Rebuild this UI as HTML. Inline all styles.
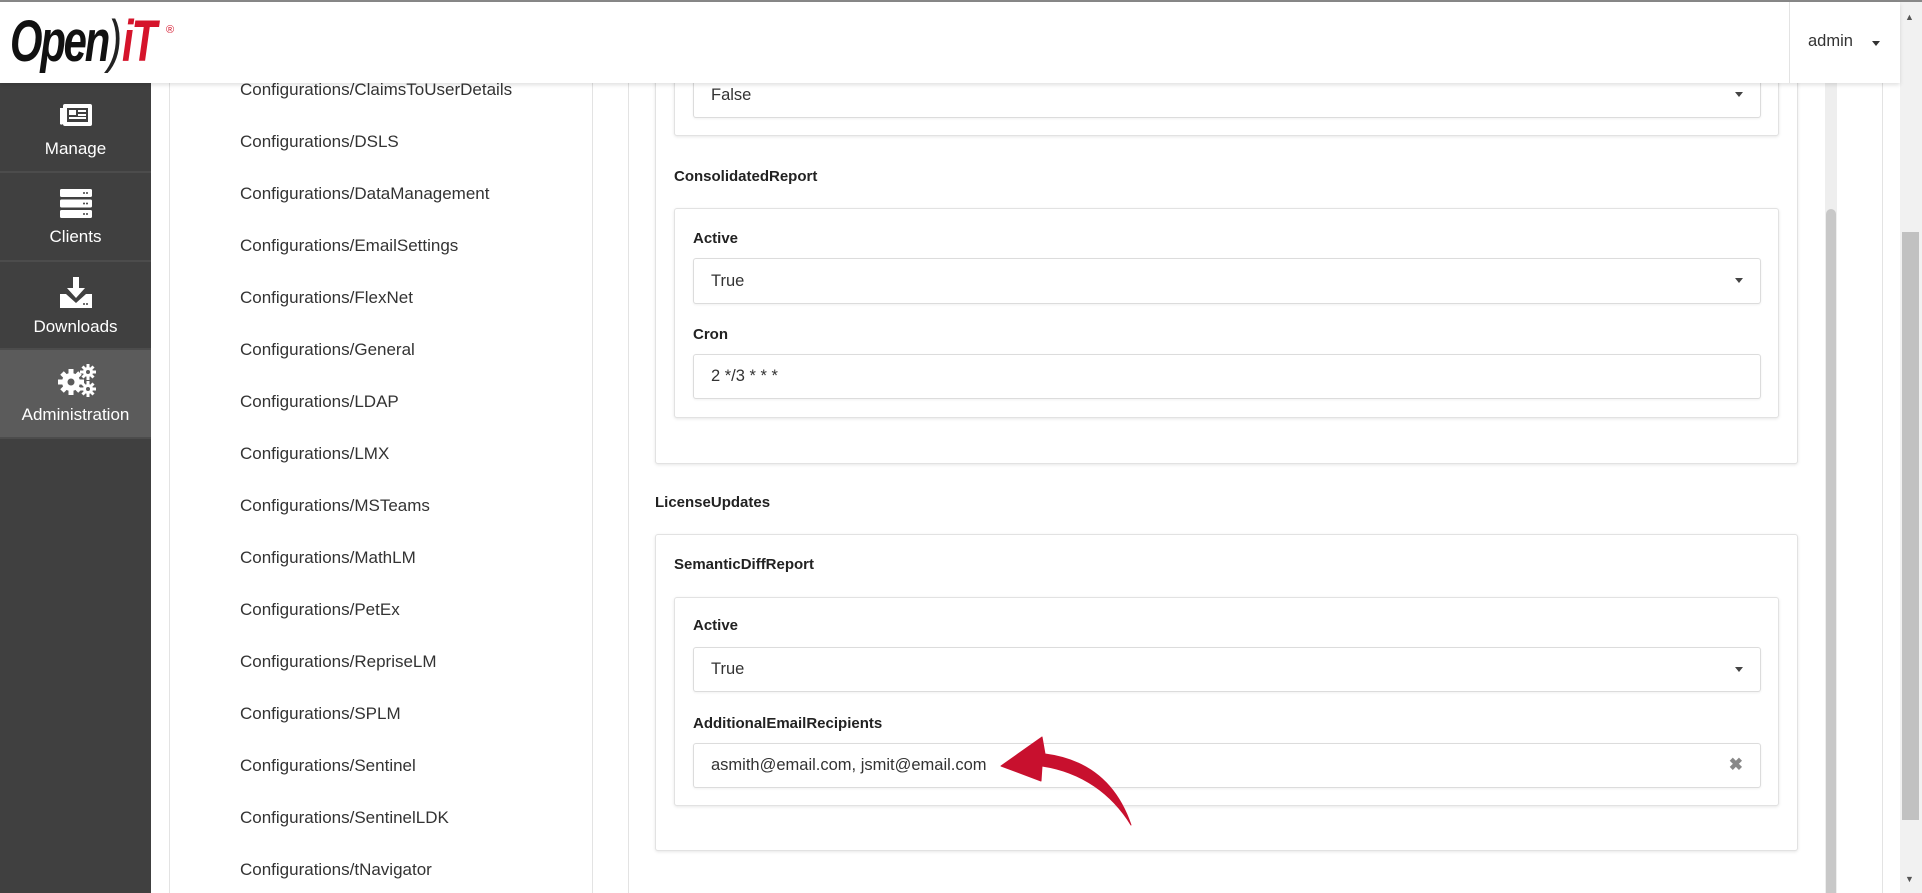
<!DOCTYPE html>
<html><head><meta charset="utf-8"><style>
*{box-sizing:border-box;margin:0;padding:0}
body{width:1922px;height:891px;overflow:hidden;background:#fff;font-family:"Liberation Sans",sans-serif;color:#333;position:relative;border-top:2px solid #888}
.abs{position:absolute}
#hdr{left:0;top:0;width:1900px;height:81px;background:#fff;box-shadow:0 2px 4px rgba(0,0,0,.12);z-index:5}
#side{left:0;top:81px;width:151px;height:810px;background:#404040}
.it{position:absolute;left:0;width:151px;color:#fff;text-align:center;font-size:17px;border-bottom:2px solid #4c4c4c}
.it span{position:absolute;left:0;width:151px;text-align:center}
.list{font-size:17px;color:#333;left:240px}
.lbl{font-size:15px;font-weight:bold;color:#222}
.card{border:1px solid #e2e2e2;border-radius:3px;box-shadow:0 1px 3px rgba(0,0,0,.1);background:#fff}
.inp{border:1px solid #dcdcdc;border-radius:3px;background:#fff;font-size:16.5px;color:#333;padding-left:17px;display:flex;align-items:center;box-shadow:0 1px 2px rgba(0,0,0,.06)}
.car{position:absolute;right:17px;top:50%;margin-top:-3px;width:0;height:0;border-left:4px solid transparent;border-right:4px solid transparent;border-top:5px solid #444}
</style></head><body>
<div id="hdr" class="abs">
 <div class="abs" style="left:10px;top:11px;font-size:58px;font-weight:bold;font-style:italic;letter-spacing:-3px;transform:scaleX(.72);transform-origin:left top;line-height:58px;color:#111;white-space:nowrap">Open<span style="font-weight:normal;color:#222;letter-spacing:0">)</span><span style="color:#d5142b">iT</span></div>
 <div class="abs" style="left:166px;top:22px;font-size:11px;color:#d5142b">®</div>
 <div class="abs" style="left:1789px;top:0;width:1px;height:81px;background:#e3e3e3"></div>
 <div class="abs" style="left:1808px;top:30px;font-size:16.5px;color:#333">admin</div>
 <div class="abs" style="left:1872px;top:39px;border-left:4px solid transparent;border-right:4px solid transparent;border-top:5px solid #333"></div>
</div>
<div class="abs" style="left:1900px;top:0;width:22px;height:891px;background:#f1f1f1"></div>
<div class="abs" style="left:1902px;top:230px;width:17px;height:588px;background:#c1c1c1"></div>
<div class="abs" style="left:1905px;top:10px;font-size:9px;color:#555">▲</div>
<div class="abs" style="left:1905px;top:872px;font-size:9px;color:#555">▼</div>

<div id="side" class="abs">
 <div class="it" style="top:0;height:90px">
  <svg class="abs" style="left:59px;top:20px" width="34" height="24" viewBox="0 0 34 24"><rect x="4" y="1" width="29" height="22" rx="2" fill="#fff"/><path d="M1 5h3v16a2 2 0 0 1-3 0z" fill="#fff"/><rect x="8" y="5" width="21" height="14" fill="#404040"/><rect x="10" y="7" width="7" height="5" fill="#fff"/><rect x="19" y="7" width="8" height="2" fill="#fff"/><rect x="19" y="11" width="8" height="2" fill="#fff"/><rect x="10" y="14" width="17" height="2" fill="#fff"/></svg>
  <span style="top:56px">Manage</span></div>
 <div class="it" style="top:90px;height:89px">
  <svg class="abs" style="left:60px;top:16px" width="32" height="29" viewBox="0 0 32 29"><rect x="0" y="0" width="32" height="8" rx="1.5" fill="#fff"/><rect x="0" y="10.5" width="32" height="8" rx="1.5" fill="#fff"/><rect x="0" y="21" width="32" height="8" rx="1.5" fill="#fff"/><g fill="#404040"><circle cx="24" cy="4" r="1"/><circle cx="27" cy="4" r="1"/><circle cx="24" cy="14.5" r="1"/><circle cx="27" cy="14.5" r="1"/><circle cx="24" cy="25" r="1"/><circle cx="27" cy="25" r="1"/></g></svg>
  <span style="top:54px">Clients</span></div>
 <div class="it" style="top:179px;height:88px">
  <svg class="abs" style="left:60px;top:15px" width="32" height="31" viewBox="0 0 32 31"><path d="M13 0h6v11h6l-9 10-9-10h6z" fill="#fff"/><path d="M0 17h6l10 9 10-9h6v14H0z" fill="#fff"/><circle cx="24" cy="27" r="1" fill="#404040"/><circle cx="27" cy="27" r="1" fill="#404040"/></svg>
  <span style="top:55px">Downloads</span></div>
 <div class="it" style="top:267px;height:89px;background:#5b5b5b">
  <svg class="abs" style="left:57px;top:14px" width="40" height="33" viewBox="0 0 40 33"><g fill="#fff"><circle cx="14" cy="18" r="9"/><g stroke="#fff" stroke-width="5"><path d="M14 5v26M1 18h26M5 9l18 18M23 9L5 27"/></g><circle cx="31" cy="8" r="5"/><g stroke="#fff" stroke-width="3"><path d="M31 0v16M23 8h16M25.5 2.5l11 11M36.5 2.5l-11 11"/></g><circle cx="31" cy="25" r="5"/><g stroke="#fff" stroke-width="3"><path d="M31 17v16M23 25h16M25.5 19.5l11 11M36.5 19.5l-11 11"/></g></g><circle cx="14" cy="18" r="3.5" fill="#5b5b5b"/><circle cx="31" cy="8" r="2" fill="#5b5b5b"/><circle cx="31" cy="25" r="2" fill="#5b5b5b"/></svg>
  <span style="top:55px">Administration</span></div>
</div>

<div class="abs" style="left:169px;top:81px;width:1px;height:810px;background:#e3e3e3"></div>
<div class="abs" style="left:592px;top:81px;width:1px;height:810px;background:#e3e3e3"></div>
<div class="abs" style="left:628px;top:81px;width:1px;height:810px;background:#e3e3e3"></div>
<div class="abs" style="left:1882px;top:81px;width:1px;height:810px;background:#e3e3e3"></div>
<div class="abs" style="left:1825px;top:81px;width:12px;height:810px;background:#eee"></div>
<div class="abs" style="left:1826px;top:207px;width:10px;height:684px;background:#c8c8c8;border-radius:5px 5px 0 0"></div>

<div class="abs list" style="top:78px">Configurations/ClaimsToUserDetails</div>
<div class="abs list" style="top:130px">Configurations/DSLS</div>
<div class="abs list" style="top:182px">Configurations/DataManagement</div>
<div class="abs list" style="top:234px">Configurations/EmailSettings</div>
<div class="abs list" style="top:286px">Configurations/FlexNet</div>
<div class="abs list" style="top:338px">Configurations/General</div>
<div class="abs list" style="top:390px">Configurations/LDAP</div>
<div class="abs list" style="top:442px">Configurations/LMX</div>
<div class="abs list" style="top:494px">Configurations/MSTeams</div>
<div class="abs list" style="top:546px">Configurations/MathLM</div>
<div class="abs list" style="top:598px">Configurations/PetEx</div>
<div class="abs list" style="top:650px">Configurations/RepriseLM</div>
<div class="abs list" style="top:702px">Configurations/SPLM</div>
<div class="abs list" style="top:754px">Configurations/Sentinel</div>
<div class="abs list" style="top:806px">Configurations/SentinelLDK</div>
<div class="abs list" style="top:858px">Configurations/tNavigator</div>

<div class="abs card" style="left:655px;top:40px;width:1143px;height:422px"></div>
<div class="abs card" style="left:674px;top:40px;width:1105px;height:94px"></div>
<div class="abs inp" style="left:693px;top:70px;width:1068px;height:46px">False<div class="car"></div></div>
<div class="abs lbl" style="left:674px;top:166px">ConsolidatedReport</div>
<div class="abs card" style="left:674px;top:206px;width:1105px;height:210px"></div>
<div class="abs lbl" style="left:693px;top:228px">Active</div>
<div class="abs inp" style="left:693px;top:256px;width:1068px;height:46px">True<div class="car"></div></div>
<div class="abs lbl" style="left:693px;top:324px">Cron</div>
<div class="abs inp" style="left:693px;top:352px;width:1068px;height:45px">2 */3 * * *</div>

<div class="abs lbl" style="left:655px;top:492px">LicenseUpdates</div>
<div class="abs card" style="left:655px;top:532px;width:1143px;height:317px"></div>
<div class="abs lbl" style="left:674px;top:554px">SemanticDiffReport</div>
<div class="abs card" style="left:674px;top:595px;width:1105px;height:209px"></div>
<div class="abs lbl" style="left:693px;top:615px">Active</div>
<div class="abs inp" style="left:693px;top:645px;width:1068px;height:45px">True<div class="car"></div></div>
<div class="abs lbl" style="left:693px;top:713px">AdditionalEmailRecipients</div>
<div class="abs inp" style="left:693px;top:741px;width:1068px;height:45px">asmith@email.com, jsmit@email.com<span style="position:absolute;right:17px;top:11px;font-size:17px;color:#888;font-weight:bold">✖</span></div>

<svg class="abs" style="left:990px;top:725px" width="150" height="110" viewBox="990 725 150 110">
<path d="M1131 823 C1118 785 1092 758 1045 752 L1042 735 L1001 764 L1041 779 L1042 764 C1082 770 1112 792 1131 823 Z" fill="#c8102e" stroke="#c8102e" stroke-width="1" stroke-linejoin="round"/>
</svg>
</body></html>
